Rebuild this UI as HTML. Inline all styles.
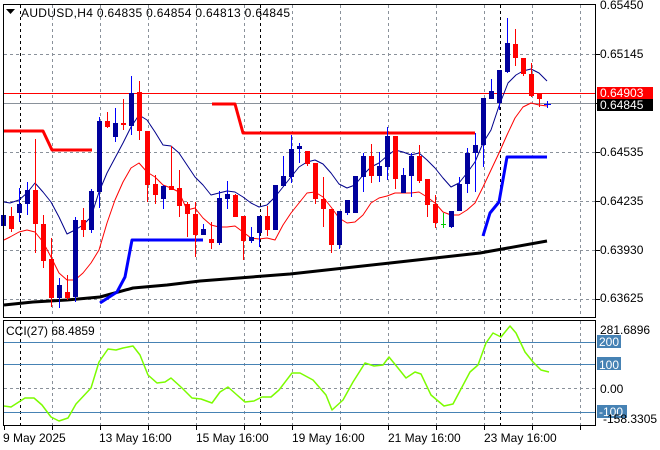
<!DOCTYPE html>
<html><head><meta charset="utf-8"><style>
html,body{margin:0;padding:0;background:#fff;}
svg{display:block;font-family:"Liberation Sans",sans-serif;}
</style></head><body>
<svg id="s" width="660" height="450" xmlns="http://www.w3.org/2000/svg">
<rect width="660" height="450" fill="#fff"/>
<g id="grid" stroke="#8a919a" stroke-width="1" stroke-dasharray="3,3" shape-rendering="crispEdges"></g>
<line x1="3" y1="93.5" x2="596" y2="93.5" stroke="#ff0000" shape-rendering="crispEdges"/>
<line x1="3" y1="103.5" x2="596" y2="103.5" stroke="#8a919a" shape-rendering="crispEdges"/>
<g id="ind" fill="none"></g>
<g id="candles" shape-rendering="crispEdges"></g>
<rect x="3.5" y="4.5" width="592" height="313" fill="none" stroke="#000" shape-rendering="crispEdges"/>
<rect x="3.5" y="320.5" width="592" height="105" fill="none" stroke="#000" shape-rendering="crispEdges"/>
<polygon points="6,9 15,9 10.5,14" fill="#000"/>
<text x="21" y="17" font-size="12" fill="#000" textLength="269" lengthAdjust="spacing">AUDUSD,H4  0.64835 0.64854 0.64813 0.64845</text>
<g font-size="12" fill="#000">
<text x="600" y="9">0.65450</text>
<text x="600" y="58">0.65145</text>
<text x="600" y="156">0.64535</text>
<text x="600" y="205">0.64235</text>
<text x="600" y="254">0.63930</text>
<text x="600" y="302">0.63625</text>
</g>
<rect x="597" y="87" width="56" height="12" fill="#ff0000"/>
<text x="600" y="97" font-size="12" fill="#fff">0.64903</text>
<rect x="597" y="99" width="56" height="12" fill="#000"/>
<text x="600" y="109" font-size="12" fill="#fff">0.64845</text>
<text x="6" y="335" font-size="12" fill="#000">CCI(27) 68.4859</text>
<g font-size="12" fill="#000">
<text x="600" y="334">281.6896</text>
<rect x="597" y="335" width="24" height="13" fill="#4682b4"/>
<text x="599" y="346" fill="#fff">200</text>
<rect x="597" y="357" width="24" height="13" fill="#4682b4"/>
<text x="599" y="369" fill="#fff">100</text>
<text x="600" y="393">0.00</text>
<rect x="597" y="405" width="30" height="13" fill="#4682b4"/>
<text x="599" y="416" fill="#fff">-100</text>
<text x="603" y="423">-158.3305</text>
</g>
<g font-size="12" fill="#000">
<text x="3" y="442">9 May 2025</text>
<text x="99" y="442">13 May 16:00</text>
<text x="196" y="442">15 May 16:00</text>
<text x="292" y="442">19 May 16:00</text>
<text x="388" y="442">21 May 16:00</text>
<text x="484" y="442">23 May 16:00</text>
</g>
<g id="ticks" stroke="#000" shape-rendering="crispEdges"></g>
</svg>
<script>
var NS="http://www.w3.org/2000/svg";
function el(p,t,a){var e=document.createElementNS(NS,t);for(var k in a)e.setAttribute(k,a[k]);document.getElementById(p).appendChild(e);return e;}
var grey=[52,100,148,196,244,292,340,388,436,484,532,580],blk=[20,260,500];
grey.forEach(function(x){el("grid","line",{x1:x+.5,y1:5,x2:x+.5,y2:317});el("grid","line",{x1:x+.5,y1:321,x2:x+.5,y2:425});});
blk.forEach(function(x){el("grid","line",{x1:x+.5,y1:5,x2:x+.5,y2:317,stroke:"#000"});el("grid","line",{x1:x+.5,y1:321,x2:x+.5,y2:425,stroke:"#000"});});
[54,152,201,250,299].forEach(function(y){el("grid","line",{x1:4,y1:y+.5,x2:595,y2:y+.5});});
el("grid","line",{x1:4,y1:388.5,x2:595,y2:388.5});
[342,364,412].forEach(function(y){el("grid","line",{x1:4,y1:y+.5,x2:595,y2:y+.5,stroke:"#4682b4","stroke-dasharray":"none"});});
[54,103,152,201,250,299].forEach(function(y){el("ticks","line",{x1:596,y1:y+.5,x2:600,y2:y+.5});});
[4,52,100,148,196,244,292,340,388,436,484,532,580].forEach(function(x){el("ticks","line",{x1:x+.5,y1:426,x2:x+.5,y2:430});});
function pl(pts,c,w){el("ind","polyline",{points:pts,stroke:c,"stroke-width":w,"stroke-linejoin":"round"});}
pl("4,305 33,302 67,300 100,297 133,288 167,285 200,281 290,274 390,263 480,253 547,241","#000",3);
pl("4,131 43,131 52,150 92,150","#ff0000",3);
pl("212,104 235,104 243,133 475,133","#ff0000",3);
pl("100,303 117,292 125,277 132,240 203,240","#0000ff",3);
pl("483,236 490,213 499,202 507,157 547,157","#0000ff",3);
pl("4,202 10,203 19,200 27,193 35,183 43,192 51,202 59,217 67,234 75,230 83,225 91,217 99,192 107,173 115,158 123,143 131,127 139,115 147,120 155,132 163,145 171,146 179,153 187,165 195,177 203,185 211,195 219,193 227,191 235,192 243,197 251,203 259,207 267,205 275,197 283,187 291,177 299,167 307,162 315,160 323,164 331,173 339,184 347,188 355,185 363,175 371,167 379,163 387,156 395,150 403,152 411,155 419,153 427,160 435,168 443,178 451,187 459,183 467,173 475,162 483,143 491,130 499,106 508,83 516,75 523,71 531,69 539,73 547,81","#00008b",1);
pl("4,240 10,237 19,232 27,230 35,232 43,242 51,257 59,273 67,280 75,280 83,273 91,263 99,250 107,223 115,200 123,182 131,168 139,163 147,172 155,177 163,185 171,188 179,192 187,210 195,208 203,218 211,225 219,227 227,227 235,226 243,232 251,238 259,239 267,238 275,240 283,225 291,213 299,203 307,193 315,192 323,197 331,207 339,218 347,223 355,222 363,215 371,203 379,198 387,196 395,193 403,193 411,193 419,192 427,197 435,203 443,212 451,215 459,215 467,210 475,203 483,187 491,170 499,153 507,135 515,118 523,107 531,103 539,105 547,106","#ff0000",1);
pl("4,406 11,407 25,398 34,398 42,405 51,417 59,421 68,418 76,404 91,388 99,362 108,349 116,350 123,348 133,346 140,355 148,375 157,383 165,382 171,378 182,388 192,398 201,399 212,403 220,392 228,387 237,395 245,402 254,401 262,397 271,397 279,390 292,373 300,373 313,380 326,395 332,410 343,400 353,382 365,363 374,366 383,365 389,357 398,368 406,378 415,372 421,374 431,395 444,406 453,404 470,372 478,365 486,343 493,333 501,337 510,326 516,333 525,352 533,362 541,370 549,372","#7cfc00",1.5);
var C=[[3,'b',215,226,187,226],[11,'r',216,229,207,232],[19,'b',204,213,188,222],[27,'b',190,204,182,215],[35,'r',190,224,139,253],[43,'r',224,261,215,268],[51,'r',259,298,238,307],[59,'b',285,298,278,308],[67,'r',292,298,275,300],[75,'b',220,297,217,302],[83,'r',220,230,208,237],[91,'b',191,230,189,233],[99,'b',121,192,117,208],[107,'r',121,127,112,128],[115,'b',123,137,108,142],[123,'r',123,125,99,130],[131,'b',93,126,76,135],[139,'r',92,131,81,140],[147,'r',131,185,131,202],[155,'r',184,195,175,204],[163,'b',186,199,185,209],[171,'r',186,190,146,190],[179,'r',188,206,170,217],[187,'r',204,214,202,237],[195,'r',214,235,202,257],[203,'b',229,235,224,235],[211,'r',239,243,222,249],[219,'b',198,243,191,245],[227,'b',194,199,181,209],[235,'r',195,217,194,217],[243,'r',216,241,216,260],[251,'b',237,241,227,243],[259,'b',216,233,216,247],[267,'r',216,230,206,236],[275,'b',185,230,185,230],[283,'b',176,186,156,186],[291,'b',149,177,135,183],[299,'b',146,149,143,163],[307,'r',151,164,151,166],[315,'r',163,199,163,204],[323,'r',199,209,177,227],[331,'r',209,245,209,253],[339,'b',211,245,211,249],[347,'b',200,213,200,215],[355,'b',176,213,176,213],[363,'b',156,177,153,192],[371,'r',156,176,144,183],[379,'b',166,176,152,182],[387,'b',136,167,127,180],[395,'r',136,179,136,189],[403,'b',175,193,168,193],[411,'b',156,176,153,197],[419,'r',156,181,145,183],[427,'r',179,205,179,217],[435,'r',204,223,195,228],[451,'b',211,227,211,228],[459,'b',184,211,177,211],[467,'b',153,184,148,193],[475,'b',145,153,133,192],[483,'b',98,145,98,167],[491,'b',91,99,79,99],[499,'b',70,103,70,110],[507,'b',43,72,18,73],[515,'r',44,58,29,66],[523,'r',58,74,58,76],[531,'r',74,96,63,97],[539,'r',94,99,94,107]];
C.forEach(function(c){var col=c[1]=='b'?'#0000ff':'#ff0000',fill=c[1]=='b'?'#00009c':'#ff0000';
el("candles","rect",{x:c[0],y:c[4],width:1,height:Math.max(1,c[5]-c[4]),fill:col});
el("candles","rect",{x:c[0]-2,y:c[2],width:5,height:Math.max(1,c[3]-c[2]),fill:fill});});
el("candles","rect",{x:443,y:213,width:1,height:15,fill:"#00cc00"});
el("candles","rect",{x:441,y:224,width:5,height:1,fill:"#00cc00"});
el("candles","rect",{x:547,y:101,width:1,height:7,fill:"#0000ff"});
el("candles","rect",{x:544,y:104,width:7,height:1,fill:"#0000ff"});
</script>
</body></html>
